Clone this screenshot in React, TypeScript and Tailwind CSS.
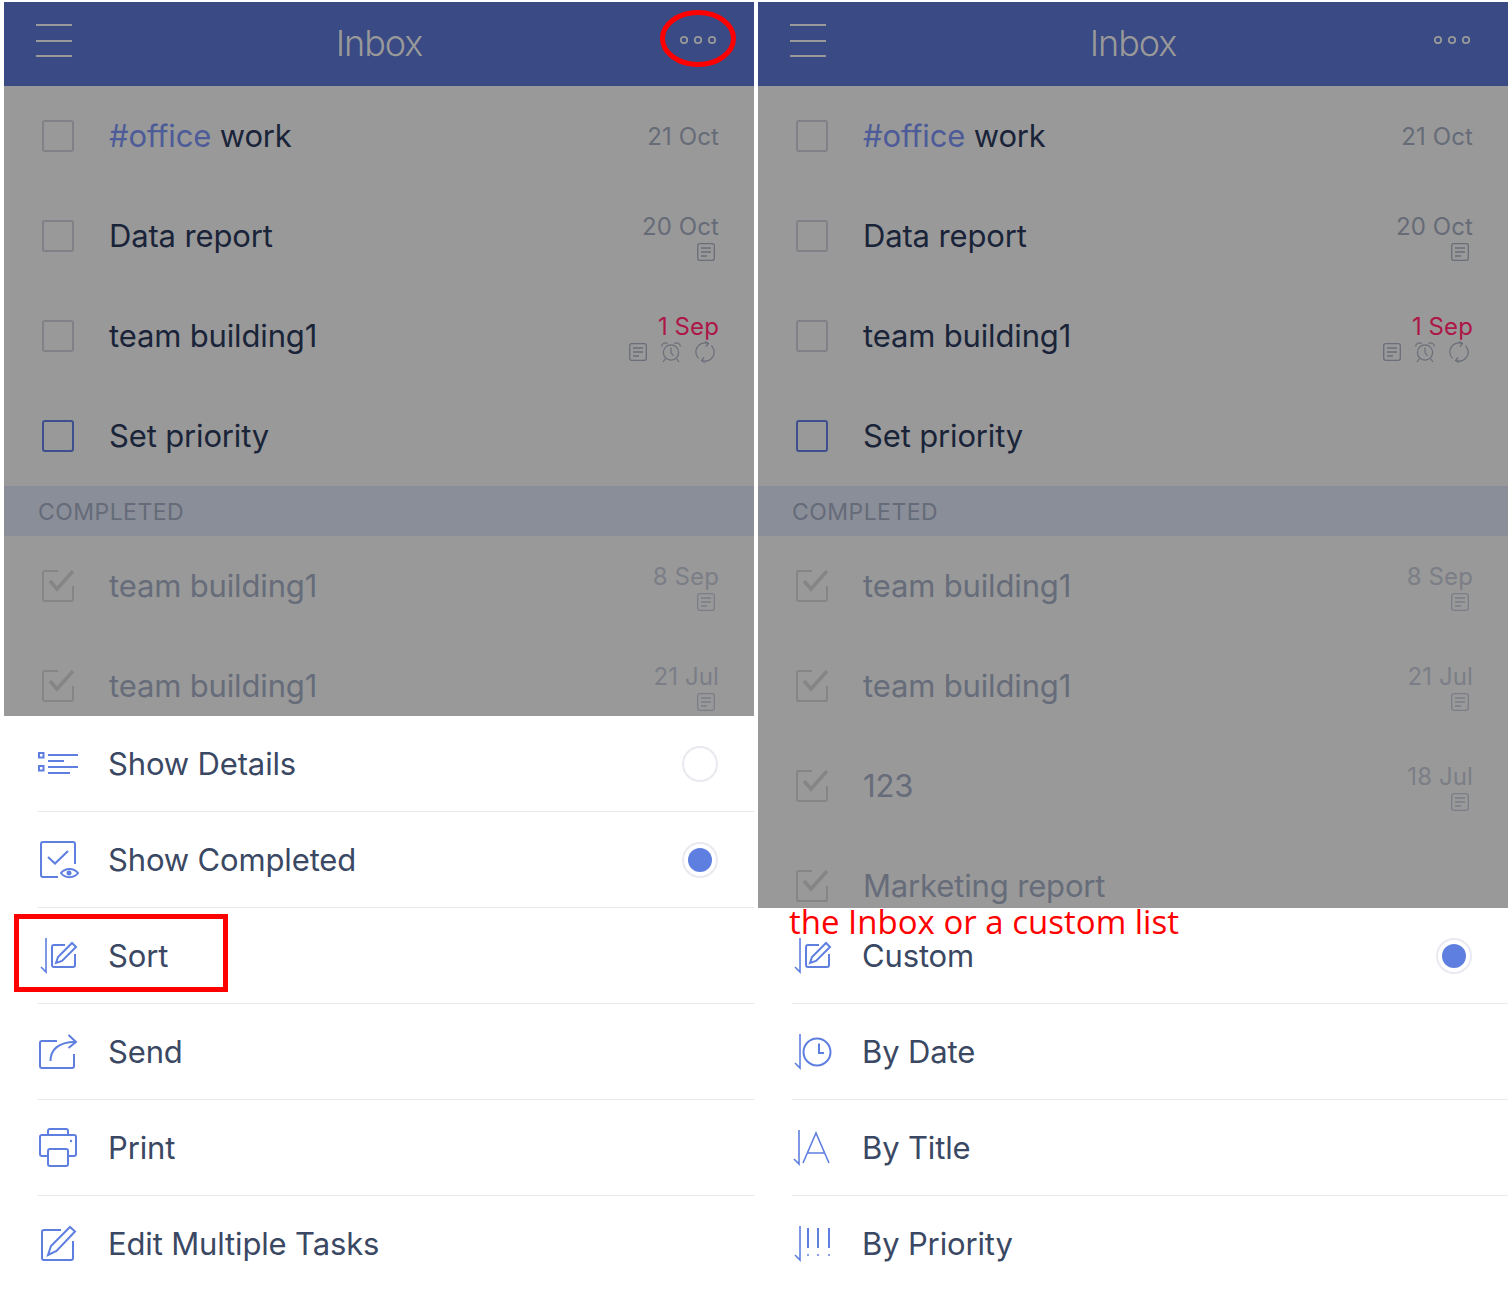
import React from "react";

const BLUE = "#5f7fe0";
const FONT = "font-['Inter','Noto_Sans',sans-serif]";

function Hamburger() {
  return (
    <svg width="36" height="34" viewBox="0 0 36 34" fill="none" stroke="#999999" strokeWidth="2" className="mt-[-7px] block">
      <path d="M0 1H36M0 17H36M0 32H36" />
    </svg>
  );
}

function Dots() {
  return (
    <svg width="40" height="10" viewBox="0 0 40 10" fill="none" stroke="#999999" strokeWidth="1.8" className="mt-[-9px] block">
      <circle cx="6" cy="5" r="3.2" />
      <circle cx="20" cy="5" r="3.2" />
      <circle cx="34" cy="5" r="3.2" />
    </svg>
  );
}

function Note({ color = "#6a6e78" }: { color?: string }) {
  return (
    <svg width="18" height="18" viewBox="0 0 18 18" fill="none" stroke={color} strokeWidth="1.3">
      <rect x="0.7" y="0.7" width="16.6" height="16.6" rx="2" />
      <path d="M4 5H14M4 9H14M4 13H10" strokeWidth="1.4" />
    </svg>
  );
}

function Alarm() {
  return (
    <svg width="22" height="22" viewBox="0 0 22 22" fill="none" stroke="#6a6e78" strokeWidth="1.2">
      <circle cx="11" cy="11.500" r="7.600" />
      <path d="M11 6.500V11.500L13.500 15" />
      <path d="M1.500 5.500C2 2.500 5 1 7.500 2.500M20.500 5.500C20 2.500 17 1 14.500 2.500" />
      <path d="M5.500 17.500L3 21M16.500 17.500L19 21" />
    </svg>
  );
}

function Repeat() {
  return (
    <svg width="20" height="22" viewBox="0 0 20 22" fill="none" stroke="#6a6e78" strokeWidth="1.2">
      <path d="M3.600 17.400A9 9 0 0 1 13 2.500" />
      <path d="M10 0.500L13.500 2.500L11 5.500" />
      <path d="M16.400 4.600A9 9 0 0 1 7 19.500" />
      <path d="M10 21.500L6.500 19.500L9 16.500" />
    </svg>
  );
}

function EmptyBox({ active }: { active?: boolean }) {
  return (
    <div className={active ? "w-[32px] h-[32px] shrink-0 rounded-[3px] border-2 border-[#3e4f8e]" : "w-[32px] h-[32px] shrink-0 rounded-[3px] border-2 border-[#808087]"} />
  );
}

function CheckedBox() {
  return (
    <svg width="32" height="32" viewBox="0 0 32 32" fill="none" stroke="#858585" strokeWidth="2" className="shrink-0">
      <path d="M16 1H3a2 2 0 0 0-2 2V29a2 2 0 0 0 2 2H29a2 2 0 0 0 2-2V16" />
      <path d="M8 11L15 19L31 1" strokeWidth="3.500" />
    </svg>
  );
}

type Task = {
  title: React.ReactNode;
  date?: string;
  late?: boolean;
  icons?: ("note" | "alarm" | "repeat")[];
  done?: boolean;
  active?: boolean;
};

const open: Task[] = [
  {
    title: (
      <>
        <span className="text-[#4d5b98]">#office</span> work
      </>
    ),
    date: "21 Oct",
  },
  { title: "Data report", date: "20 Oct", icons: ["note"] },
  { title: "team building1", date: "1 Sep", late: true, icons: ["note", "alarm", "repeat"] },
  { title: "Set priority", active: true },
];

const doneLeft: Task[] = [
  { title: "team building1", date: "8 Sep", icons: ["note"], done: true },
  { title: "team building1", date: "21 Jul", icons: ["note"], done: true },
];

const doneRight: Task[] = [
  ...doneLeft,
  { title: "123", date: "18 Jul", icons: ["note"], done: true },
  { title: "Marketing report", done: true },
];

function TaskRow({ t }: { t: Task }) {
  return (
    <div className="h-[100px] shrink-0 flex items-center pl-[38px] pr-[35px]">
      {t.done ? <CheckedBox /> : <EmptyBox active={t.active} />}
      <div className={t.done ? "ml-[35px] flex-1 text-[31px] leading-[40px] tracking-[-0.15px] text-[#666c79]" : "ml-[35px] flex-1 text-[31px] leading-[40px] tracking-[-0.15px] text-[#1a2439]"}>
        {t.title}
      </div>
      {t.date && (
        <div className={t.icons ? "flex flex-col items-end pt-[4px]" : "flex flex-col items-end pt-[2px]"}>
          <div
            className={
              t.late
                ? "text-[24px] leading-[28px] tracking-[0.1px] text-[#ad1647]"
                : t.done
                  ? "text-[24px] leading-[28px] tracking-[0.1px] text-[#7b7e86]"
                  : "text-[24px] leading-[28px] tracking-[0.1px] text-[#666b78]"
            }
          >
            {t.date}
          </div>
          {t.icons && (
            <div className="flex items-center justify-end gap-[13px] mr-[4px] h-[22px]">
              {t.icons.map((ic, i) =>
                ic === "note" ? (
                  <Note key={i} color={t.done ? "#7b7e86" : "#6a6e78"} />
                ) : ic === "alarm" ? (
                  <Alarm key={i} />
                ) : (
                  <Repeat key={i} />
                ),
              )}
            </div>
          )}
        </div>
      )}
    </div>
  );
}

function Ic({ children }: { children: React.ReactNode }) {
  return (
    <svg width="44" height="44" viewBox="0 0 44 44" fill="none" stroke={BLUE} strokeWidth="2" className="shrink-0">
      {children}
    </svg>
  );
}

const Arrow = ({ x = 8 }: { x?: number }) => (
  <path d={`M${x} 4V38L${x - 5} 33`} strokeWidth="1.6" />
);

const icons: Record<string, React.ReactNode> = {
  details: (
    <>
      <rect x="1" y="11" width="4.500" height="4.500" />
      <rect x="1" y="24" width="4.500" height="4.500" />
      <path d="M10 13H40M10 19H26M10 25H40M10 31H32" />
    </>
  ),
  completed: (
    <>
      <path d="M37 26V6a2 2 0 0 0-2-2H5a2 2 0 0 0-2 2V37a2 2 0 0 0 2 2H20" />
      <path d="M10 19L17 25.500L30 13" />
      <path d="M23 35C27 29.500 36 29.500 40 35C36 40.500 27 40.500 23 35Z" />
      <circle cx="31" cy="35" r="2.500" fill={BLUE} stroke="none" />
    </>
  ),
  sort: (
    <>
      <Arrow />
      <path d="M27 11H16a2 2 0 0 0-2 2V31a2 2 0 0 0 2 2H35a2 2 0 0 0 2-2V20" />
      <path d="M18 29L20 23L34 9L38 13L24 27Z" />
    </>
  ),
  send: (
    <>
      <path d="M19 11H4a2 2 0 0 0-2 2V36a2 2 0 0 0 2 2H34a2 2 0 0 0 2-2V24" />
      <path d="M12.500 31C12.500 20 20 12 37 12" />
      <path d="M30.500 5L38 12L30.500 18" />
    </>
  ),
  print: (
    <>
      <path d="M10 9V5a2 2 0 0 1 2-2H28a2 2 0 0 1 2 2V9" />
      <path d="M10 30H4a2 2 0 0 1-2-2V11a2 2 0 0 1 2-2H36a2 2 0 0 1 2 2V28a2 2 0 0 1-2 2H30" />
      <rect x="10" y="23" width="20" height="17" rx="2" />
      <circle cx="33" cy="15" r="1.200" fill={BLUE} stroke="none" />
    </>
  ),
  edit: (
    <>
      <path d="M23 8H6a2 2 0 0 0-2 2V36a2 2 0 0 0 2 2H33a2 2 0 0 0 2-2V19" />
      <path d="M10 33L13 24L32 5L37 9.500L18.500 29Z" />
    </>
  ),
  date: (
    <>
      <Arrow />
      <circle cx="25" cy="22" r="13.500" />
      <path d="M27 13.500V23H32" />
    </>
  ),
  title: (
    <>
      <Arrow x={7} />
      <path d="M11 37L24 7L37 37M15.500 27H32.500" strokeWidth="1.600" />
    </>
  ),
  priority: (
    <>
      <Arrow />
      <path d="M16 6V26M26 6V26M37 6V26" />
      <circle cx="16" cy="33" r="1" fill={BLUE} stroke="none" />
      <circle cx="26" cy="33" r="1" fill={BLUE} stroke="none" />
      <circle cx="37" cy="33" r="1" fill={BLUE} stroke="none" />
    </>
  ),
};

type Item = { icon: string; label: string; radio?: "off" | "on" };

function SheetRow({ it, last }: { it: Item; last: boolean }) {
  return (
    <div className="h-[96px] shrink-0 ml-[34px] flex flex-col">
      <div className={last ? "flex-1 flex items-center pr-[36px]" : "flex-1 flex items-center pr-[36px] pt-[2px]"}>
        <Ic>{icons[it.icon]}</Ic>
        <div className="ml-[26px] flex-1 text-[31px] leading-[40px] tracking-[-0.15px] text-[#3a4863]">{it.label}</div>
        {it.radio && (
          <div className="w-[36px] h-[36px] rounded-full border-2 border-[#e9eaf0] flex items-center justify-center">
            {it.radio === "on" && <div className="w-[24px] h-[24px] rounded-full bg-[#5f7fe0]" />}
          </div>
        )}
      </div>
      {!last && <div className="h-[1.5px] bg-[#e8e9ec]" />}
    </div>
  );
}

function Panel({ done, items, children }: { done: Task[]; items: Item[]; children?: React.ReactNode }) {
  return (
    <div className="relative w-[750px] h-[1290px] flex flex-col bg-white">
      <div className="h-[84px] shrink-0 bg-[#3a4a84] grid grid-cols-3 items-center">
        <div className="pl-[32px]">
          <Hamburger />
        </div>
        <div className="text-center text-[36px] leading-[44px] font-light text-[#999999] tracking-[-1.1px] mt-[-3px]">Inbox</div>
        <div className="flex justify-end pr-[36px]">
          <Dots />
        </div>
      </div>
      <div className="flex-1 min-h-0 overflow-hidden bg-[#999999] flex flex-col">
        {open.map((t, i) => (
          <TaskRow key={i} t={t} />
        ))}
        <div className="h-[50px] shrink-0 bg-[#8a8e99] flex items-center pl-[34px] pt-[2px] text-[23px] tracking-[0.45px] text-[#656b78]">
          COMPLETED
        </div>
        {done.map((t, i) => (
          <TaskRow key={i} t={t} />
        ))}
      </div>
      <div className="shrink-0 bg-white">
        {items.map((it, i) => (
          <SheetRow key={i} it={it} last={i === items.length - 1} />
        ))}
      </div>
      {children}
    </div>
  );
}

const leftItems: Item[] = [
  { icon: "details", label: "Show Details", radio: "off" },
  { icon: "completed", label: "Show Completed", radio: "on" },
  { icon: "sort", label: "Sort" },
  { icon: "send", label: "Send" },
  { icon: "print", label: "Print" },
  { icon: "edit", label: "Edit Multiple Tasks" },
];

const rightItems: Item[] = [
  { icon: "sort", label: "Custom", radio: "on" },
  { icon: "date", label: "By Date" },
  { icon: "title", label: "By Title" },
  { icon: "priority", label: "By Priority" },
];

export default function App() {
  return (
    <div className={`w-[1512px] h-[1296px] bg-white pt-[2px] pl-[4px] flex gap-[4px] overflow-hidden ${FONT}`}>
      <Panel done={doneLeft} items={leftItems}>
        <svg width="80" height="62" viewBox="0 0 80 62" fill="none" stroke="#ff0000" strokeWidth="5" className="absolute left-[655px] top-[6px]">
          <ellipse cx="39" cy="30.500" rx="35.500" ry="26" />
        </svg>
        <div className="absolute left-[10px] top-[912px] w-[214px] h-[78px] border-[5px] border-[#ff0000]" />
      </Panel>
      <Panel done={doneRight} items={rightItems}>
        <div className="absolute left-[31px] top-[898px] whitespace-nowrap font-['Open_Sans',sans-serif] text-[33px] leading-[44px] text-[#ff0000]">
          the Inbox or a custom list
        </div>
      </Panel>
    </div>
  );
}
